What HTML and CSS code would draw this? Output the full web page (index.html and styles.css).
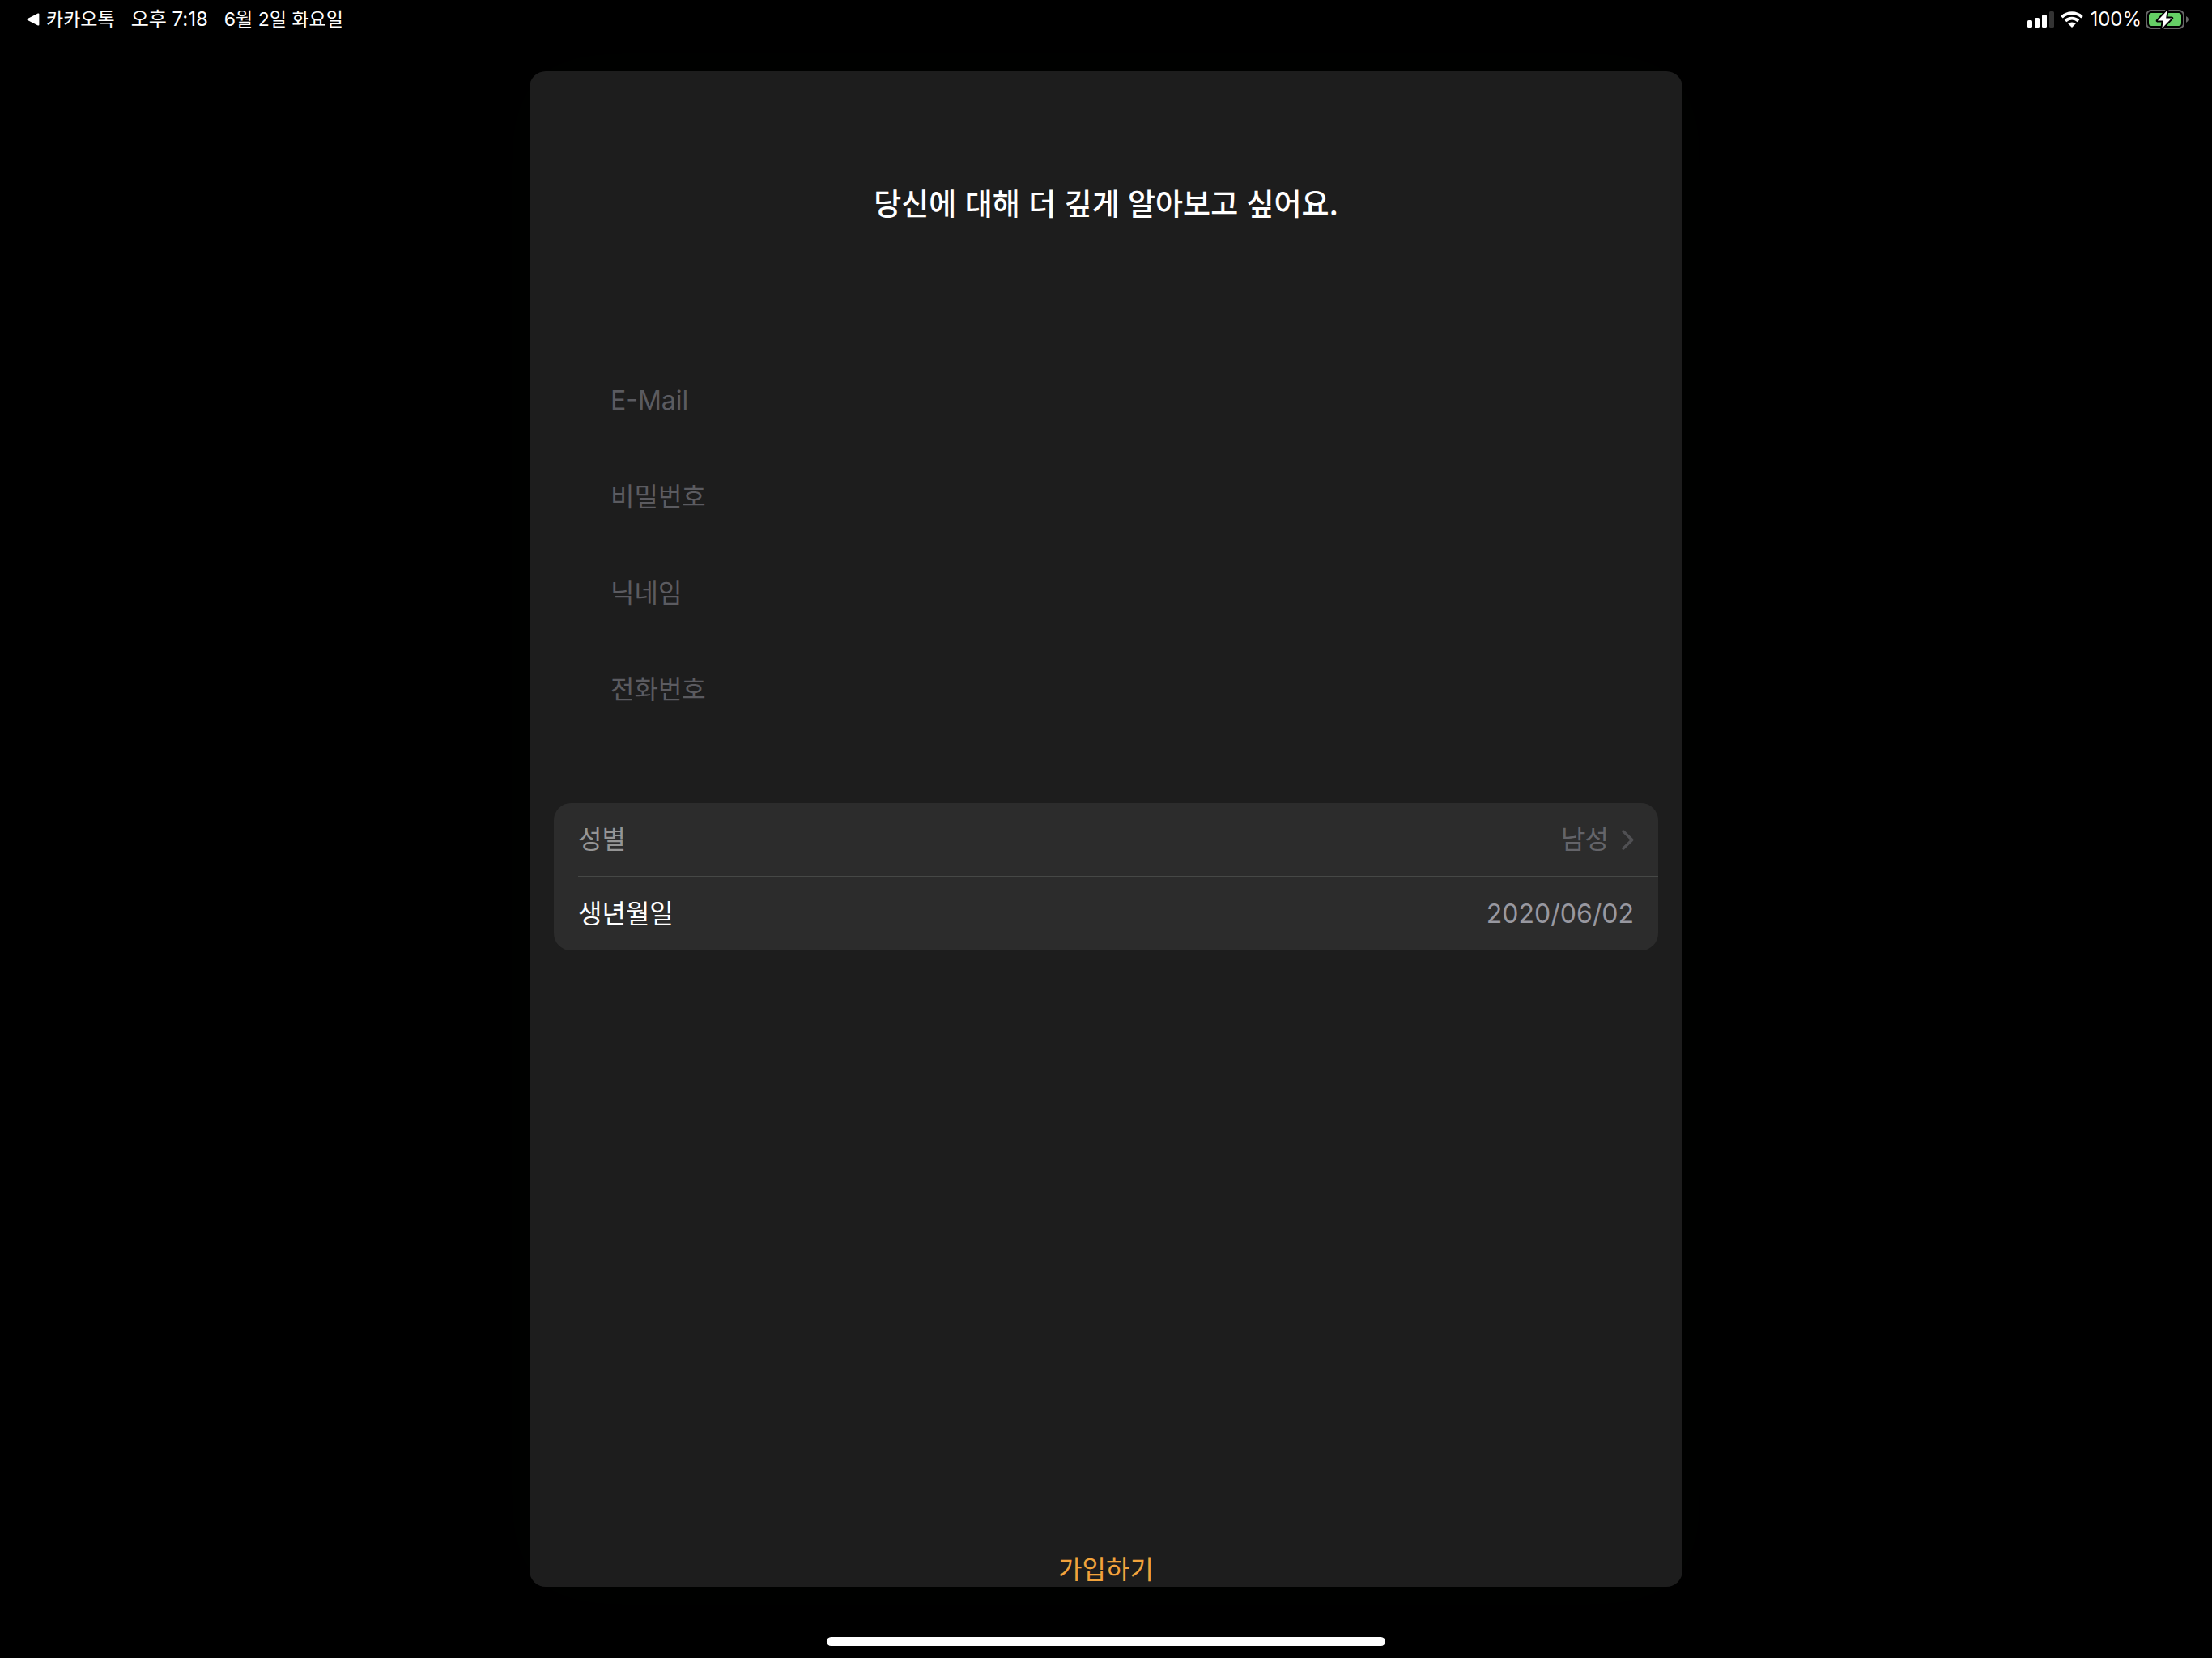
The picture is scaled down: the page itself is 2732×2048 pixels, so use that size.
FILE: index.html
```
<!DOCTYPE html>
<html lang="ko">
<head>
<meta charset="utf-8">
<meta name="viewport" content="width=device-width, initial-scale=1">
<title>가입하기</title>
<link rel="stylesheet" href="styles.css">
</head>
<body class="screen">
  <header class="status">
    <div class="status-left">
      <a class="back" href="#">
        <svg width="16" height="16" viewBox="0 0 16 16" aria-hidden="true"><path d="M1.2 7 13.8.6Q15.4 0 15.4 1.6V14.4Q15.4 16 13.8 15.4L1.2 9Q-.4 8 1.2 7Z" fill="#fff"/></svg>
        <span>카카오톡</span>
      </a>
      <span class="figure">오후 7:18</span>
      <span>6월 2일 화요일</span>
    </div>
    <div class="status-right">
      <svg width="33" height="20" viewBox="0 0 33 20" aria-hidden="true">
        <g fill="#fff"><rect y="11" width="6" height="9" rx="1.6"/><rect x="9" y="8" width="6" height="12" rx="1.6"/><rect x="18" y="4" width="6" height="16" rx="1.6"/></g>
        <rect x="27" width="6" height="20" rx="1.6" fill="#333"/>
      </svg>
      <svg class="wifi" width="28" height="20" viewBox="0 0 28 20" aria-hidden="true">
        <g fill="none" stroke="#fff" stroke-width="3.6"><path d="M1.5 7.2A18 18 0 0 1 26.5 7.2"/><path d="M6 11.9A11.5 11.5 0 0 1 22 11.9"/></g>
        <path d="M14 20 9.2 15.3A7 7 0 0 1 18.8 15.3Z" fill="#fff"/>
      </svg>
      <span class="figure">100%</span>
      <svg class="battery" width="53" height="24" viewBox="0 0 53 24" aria-hidden="true">
        <rect x="1" y="1" width="46" height="22" rx="6" fill="none" stroke="#666" stroke-width="2"/>
        <path d="M50 8Q53 9.500 53 12T50 16Z" fill="#666"/>
        <rect x="4" y="4" width="40" height="16" rx="3.500" fill="#65cf65"/>
        <path d="M26.500 1 14.800 13.600H21.800L20.300 23 32.200 10.400H25.200Z" fill="#fff" stroke="#000" stroke-width="4" paint-order="stroke" stroke-linejoin="round"/>
      </svg>
    </div>
  </header>

  <main class="sheet">
    <form class="form">
      <h1 class="title">당신에 대해 더 깊게 알아보고 싶어요.</h1>
      <div class="fields">
        <input class="field" type="email" placeholder="E-Mail" aria-label="E-Mail">
        <input class="field" type="password" placeholder="비밀번호" aria-label="비밀번호">
        <input class="field" type="text" placeholder="닉네임" aria-label="닉네임">
        <input class="field" type="tel" placeholder="전화번호" aria-label="전화번호">
      </div>
      <div class="group">
        <button class="row" type="button" disabled>
          <span>성별</span>
          <span class="choice">남성
            <svg width="15" height="25" viewBox="0 0 15 25" aria-hidden="true"><path d="M2 2 12.800 12.500 2 23" fill="none" stroke="#505053" stroke-width="3.400" stroke-linecap="round" stroke-linejoin="round"/></svg>
          </span>
        </button>
        <button class="row" type="button">
          <span>생년월일</span>
          <span class="date">2020/06/02</span>
        </button>
      </div>
      <button class="submit" type="submit">가입하기</button>
    </form>
  </main>

  <footer class="home"><div class="home-bar"></div></footer>
</body>
</html>
```
FILE: styles.css
```
* {
  box-sizing: border-box;
}

.screen {
  display: flex;
  flex-direction: column;
  min-height: 100vh;
  margin: 0;
  background: #000;
  color: #fff;
  font-family: Inter, "Noto Sans CJK KR", sans-serif;
  font-size: 32px;
  line-height: 48px;
}

.status {
  display: flex;
  justify-content: space-between;
  align-items: center;
  height: 48px;
  padding: 0 29px 0 33px;
  font-size: 23px;
}

.status-left,
.status-right,
.back {
  display: flex;
  align-items: center;
}

.status-left {
  gap: 20px;
}

.status-right {
  gap: 8px;
}

.back {
  gap: 8px;
  color: inherit;
  text-decoration: none;
}

.figure {
  font-size: 24px;
}

.battery {
  margin-left: -3px;
}

.sheet {
  display: flex;
  flex: 1;
  width: calc(100% - 64px);
  max-width: 1424px;
  margin: 40px auto 0;
  border-radius: 20px;
  background: #1d1d1d;
  box-shadow: 0 0 100px #000300;
}

.form {
  display: flex;
  flex: 1;
  flex-direction: column;
  padding: 0 30px;
}

.title {
  margin: 138px 0 161px;
  font-family: "Noto Sans CJK KR", sans-serif;
  font-size: 37px;
  font-weight: 500;
  line-height: 48px;
  text-align: center;
}

.fields {
  display: flex;
  flex-direction: column;
  padding: 0 70px;
  margin-bottom: 81px;
}

.field {
  width: 100%;
  height: 119px;
  padding: 0;
  border: 0;
  outline: 0;
  background: none;
  color: #fff;
  font: inherit;
}

.field::placeholder {
  color: #5b5b60;
  opacity: 1;
}

.group {
  overflow: hidden;
  border-radius: 21px;
  background: #2c2c2c;
}

.row {
  display: flex;
  justify-content: space-between;
  align-items: center;
  width: calc(100% - 30px);
  height: 90px;
  margin-left: 30px;
  padding: 0 30px 0 0;
  border: 0;
  background: none;
  color: #fff;
  font: inherit;
}

.row + .row {
  height: 92px;
  border-top: 1px solid #464846;
}

.row:disabled {
  color: #959595;
}

.choice {
  display: flex;
  align-items: center;
  gap: 16px;
  color: #646469;
}

.date {
  color: #9898a0;
}

.submit {
  align-self: center;
  margin-top: auto;
  padding: 0;
  border: 0;
  background: none;
  color: #f2a33c;
  font: inherit;
  line-height: 42px;
}

.home {
  display: flex;
  justify-content: center;
  align-items: flex-end;
  height: 88px;
  padding-bottom: 15px;
}

.home-bar {
  width: 690px;
  max-width: 60%;
  height: 11px;
  border-radius: 6px;
  background: #fff;
}
```
